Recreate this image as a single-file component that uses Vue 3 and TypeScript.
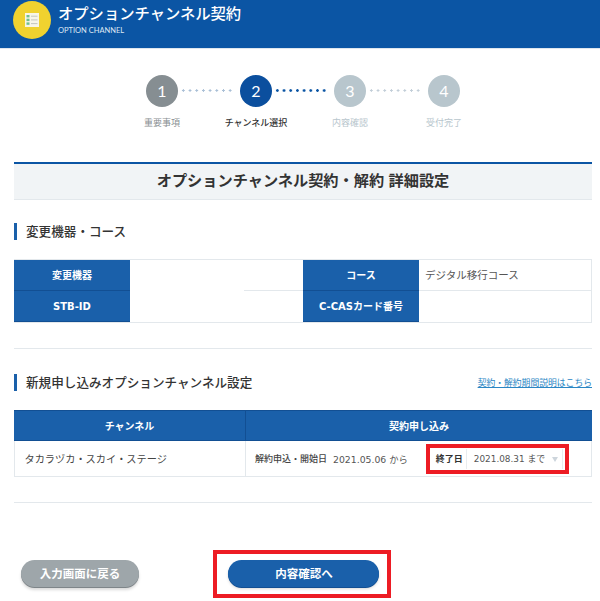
<script setup lang="ts">
interface Step { n: number; label: string; state: string }
const steps: Step[] = [
  { n: 1, label: '重要事項', state: 'done' },
  { n: 2, label: 'チャンネル選択', state: 'current' },
  { n: 3, label: '内容確認', state: 'todo' },
  { n: 4, label: '受付完了', state: 'todo' },
]
</script>

<template>
  <div class="page">
    <header class="hero">
      <div class="badge">
        <svg width="14" height="14" viewBox="0 0 14 14">
          <rect x="0" y="0" width="14" height="14" fill="#f7f5e8" />
          <rect x="1.5" y="2" width="3" height="2.4" fill="#6fbf8f" />
          <rect x="1.5" y="5.7" width="3" height="2.4" fill="#6fbf8f" />
          <rect x="1.5" y="9.4" width="3" height="2.4" fill="#6fbf8f" />
          <rect x="6" y="2.7" width="6.5" height="1" fill="#c4c6bd" />
          <rect x="6" y="6.4" width="6.5" height="1" fill="#c4c6bd" />
          <rect x="6" y="10.1" width="6.5" height="1" fill="#c4c6bd" />
        </svg>
      </div>
      <div class="hero-text">
        <div class="hero-title">オプションチャンネル契約</div>
        <div class="hero-sub">OPTION CHANNEL</div>
      </div>
    </header>

    <ol class="steps">
      <li v-for="s in steps" :key="s.n" class="step" :class="s.state">
        <span class="num">{{ s.n }}</span>
        <span class="lbl">{{ s.label }}</span>
      </li>
    </ol>

    <main class="content">
      <h1 class="page-title">オプションチャンネル契約・解約 詳細設定</h1>

      <h2 class="sec-head first">変更機器・コース</h2>
      <div class="info">
        <div class="th">変更機器</div>
        <div class="td"></div>
        <div class="td gap line"></div>
        <div class="th">コース</div>
        <div class="td val">デジタル移行コース</div>
        <div class="th">STB-ID</div>
        <div class="td"></div>
        <div class="td gap"></div>
        <div class="th">C-CASカード番号</div>
        <div class="td val"></div>
      </div>

      <hr class="rule r1" />

      <div class="head-row">
        <h2 class="sec-head">新規申し込みオプションチャンネル設定</h2>
        <a class="link" href="#">契約・解約期間説明はこちら</a>
      </div>

      <div class="plan">
        <div class="ph">チャンネル</div>
        <div class="ph">契約申し込み</div>
        <div class="pd name">タカラヅカ・スカイ・ステージ</div>
        <div class="pd term">
          <b class="term-l">解約申込・開始日</b>
          <span class="term-v">2021.05.06 から</span>
          <div class="mark end">
            <b class="end-l">終了日</b>
            <div class="select">2021.08.31 まで<i class="caret"></i></div>
          </div>
        </div>
      </div>

      <hr class="rule r2" />

      <div class="actions">
        <button class="btn back" type="button">入力画面に戻る</button>
        <div class="mark next-wrap">
          <button class="btn next" type="button">内容確認へ</button>
        </div>
      </div>
    </main>
  </div>
</template>

<style>
html, body { margin: 0; background: #fff; }
</style>

<style scoped>
.page {
  width: 600px;
  height: 601px;
  overflow: hidden;
  font-family: "Noto Sans CJK JP", "Open Sans", sans-serif;
  color: #333;
  background: #fff;
}
.hero {
  height: 48px;
  background: #0b55a4;
  border-bottom: 1px solid #dfe6ee;
  box-sizing: content-box;
  display: flex;
  align-items: flex-start;
  padding-left: 13px;
}
.badge {
  width: 38px;
  height: 38px;
  margin-top: 1px;
  border-radius: 50%;
  background: #f0d22f;
  display: flex;
  align-items: center;
  justify-content: center;
  flex: none;
}
.hero-text { margin-left: 7px; color: #fff; }
.hero-title {
  font-size: 15.3px;
  font-weight: 500;
  line-height: 20px;
  margin-top: 2px;
  white-space: nowrap;
}
.hero-sub {
  font-family: Lato, sans-serif;
  font-size: 7.5px;
  line-height: 10px;
  margin-top: 4px;
  color: #dfe8f3;
}
.steps {
  list-style: none;
  margin: 26px 0 0;
  padding: 0 0 0 115px;
  display: flex;
}
.step {
  width: 94px;
  display: flex;
  flex-direction: column;
  align-items: center;
  position: relative;
}
.step + .step::before {
  content: "";
  position: absolute;
  left: -29px;
  top: 14px;
  width: 54px;
  height: 3px;
  background: radial-gradient(circle at center, #a9bfd6 1px, transparent 1.3px) 0 0 / 6.7px 3px repeat-x;
}
.step:nth-child(3)::before {
  background-image: radial-gradient(circle at center, #0b55a4 1.2px, transparent 1.5px);
}
.step:nth-child(4)::before {
  background-image: radial-gradient(circle at center, #c2ced8 1px, transparent 1.3px);
}
.num {
  width: 32px;
  height: 32px;
  border-radius: 50%;
  color: #fff;
  font-family: Lato, sans-serif;
  font-size: 16px;
  line-height: 32px;
  text-align: center;
}
.lbl {
  font-size: 9px;
  line-height: 12px;
  margin-top: 10px;
  white-space: nowrap;
}
.done .num { background: #868e92; }
.done .lbl { color: #8a8f92; }
.current .num { background: #0b4f9e; }
.current .lbl { color: #333; font-weight: 500; }
.todo .num { background: #b8c6cd; }
.todo .lbl { color: #b8c6cd; }

.content { padding: 0 8px 0 14px; }
.page-title {
  margin: 33px 0 0;
  height: 38px;
  box-sizing: border-box;
  border-top: 2px solid #0b55a4;
  border-bottom: 1px solid #e3e8ec;
  background: #f1f4f6;
  font-size: 15.2px;
  font-weight: 700;
  line-height: 31px;
  text-align: center;
  word-spacing: 1px;
  color: #333;
}
.sec-head {
  margin: 0;
  border-left: 3px solid #1a60aa;
  padding-left: 9px;
  height: 17px;
  line-height: 15px;
  font-size: 12.6px;
  font-weight: 500;
  color: #333;
  white-space: nowrap;
}
.sec-head.first { margin-top: 23px; }
.info {
  margin-top: 19px;
  display: grid;
  grid-template-columns: 116px 114px 59px 116px 173px;
  grid-auto-rows: 31px;
  border-top: 1px solid #e3e8ec;
  border-bottom: 1px solid #e3e8ec;
  border-right: 1px solid #e3e8ec;
  box-sizing: content-box;
}
.th {
  background: #1a60aa;
  color: #fff;
  font-family: "DejaVu Sans", "Noto Sans CJK JP", sans-serif;
  font-size: 10px;
  font-weight: 700;
  text-align: center;
  line-height: 31px;
  box-shadow: inset 0 -1px 0 #124f93;
  white-space: nowrap;
}
.td { font-size: 10.5px; line-height: 29px; color: #555; }
.td.val { padding-left: 6px; }
.td.val:nth-child(5) { border-bottom: 1px solid #e3e8ec; }
.td.line { border-bottom: 1px solid #e3e8ec; }
.rule {
  margin: 0;
  border: 0;
  height: 1px;
  background: #e3e8ec;
}
.r1 { margin-top: 25px; }
.r2 { margin-top: 25px; }
.head-row {
  margin-top: 25px;
  display: flex;
  justify-content: space-between;
  align-items: center;
}
.link {
  font-size: 8.8px;
  color: #2a86c4;
  text-decoration: underline;
}
.plan {
  margin-top: 19px;
  display: grid;
  grid-template-columns: 231px 347px;
  grid-template-rows: 31px 35px;
  border-bottom: 1px solid #e3e8ec;
}
.ph {
  background: #1a60aa;
  border-top: 1px solid #124f93;
  border-bottom: 1px solid #124f93;
  color: #fff;
  font-size: 10px;
  font-weight: 700;
  text-align: center;
  line-height: 29px;
}
.ph + .ph { border-left: 1px solid #124f93; }
.pd { display: flex; align-items: center; }
.name {
  border-left: 1px solid #e3e8ec;
  padding-left: 9.5px;
  font-size: 10.2px;
  color: #444;
}
.term {
  border-left: 1px solid #e3e8ec;
  border-right: 1px solid #e3e8ec;
  padding-left: 9px;
  font-size: 9px;
}
.term-l { font-weight: 500; color: #444; }
.term-v {
  margin-left: 6px;
  color: #555;
  font-family: "DejaVu Sans", "Noto Sans CJK JP", sans-serif;
  font-size: 9.3px;
  white-space: nowrap;
}
.mark { border: 4px solid #ed1c24; box-sizing: border-box; background: #fff; }
.end {
  margin-left: 18px;
  width: 143px;
  height: 30px;
  flex: none;
  display: flex;
  align-items: center;
}
.end-l { margin-left: 6px; font-weight: 700; color: #333; font-size: 9px; white-space: nowrap; }
.select {
  margin-left: 3px;
  width: 97px;
  height: 20px;
  box-sizing: border-box;
  border: 1px solid #e8ecef;
  border-width: 0 1px 0 1px;
  padding-left: 7px;
  line-height: 20px;
  color: #555;
  font-family: "DejaVu Sans", "Noto Sans CJK JP", sans-serif;
  font-size: 8.9px;
  white-space: nowrap;
  position: relative;
}
.caret {
  position: absolute;
  right: 4px;
  top: 8px;
  border-left: 3px solid transparent;
  border-right: 3px solid transparent;
  border-top: 5px solid #cdd5dc;
}
.actions {
  margin-top: 47px;
  display: flex;
  align-items: center;
  padding-left: 7px;
}
.btn {
  border: 0;
  padding: 0;
  height: 27px;
  border-radius: 14px;
  color: #fff;
  font-family: inherit;
  font-size: 11.5px;
  font-weight: 700;
}
.back {
  width: 118px;
  margin-top: -2px;
  background: #9ea6aa;
  box-shadow: 0 1px 0 #7e8589, 0 3px 3px rgba(0,0,0,.15);
}
.next-wrap {
  margin-left: 74px;
  width: 178px;
  height: 48px;
  padding: 0 0 2px 11px;
  display: flex;
  align-items: center;
}
.next {
  width: 151px;
  padding-left: 1px;
  background: #1a60aa;
  box-shadow: 0 1px 0 #124f93, 0 2px 3px rgba(0,0,0,.15);
}
</style>
